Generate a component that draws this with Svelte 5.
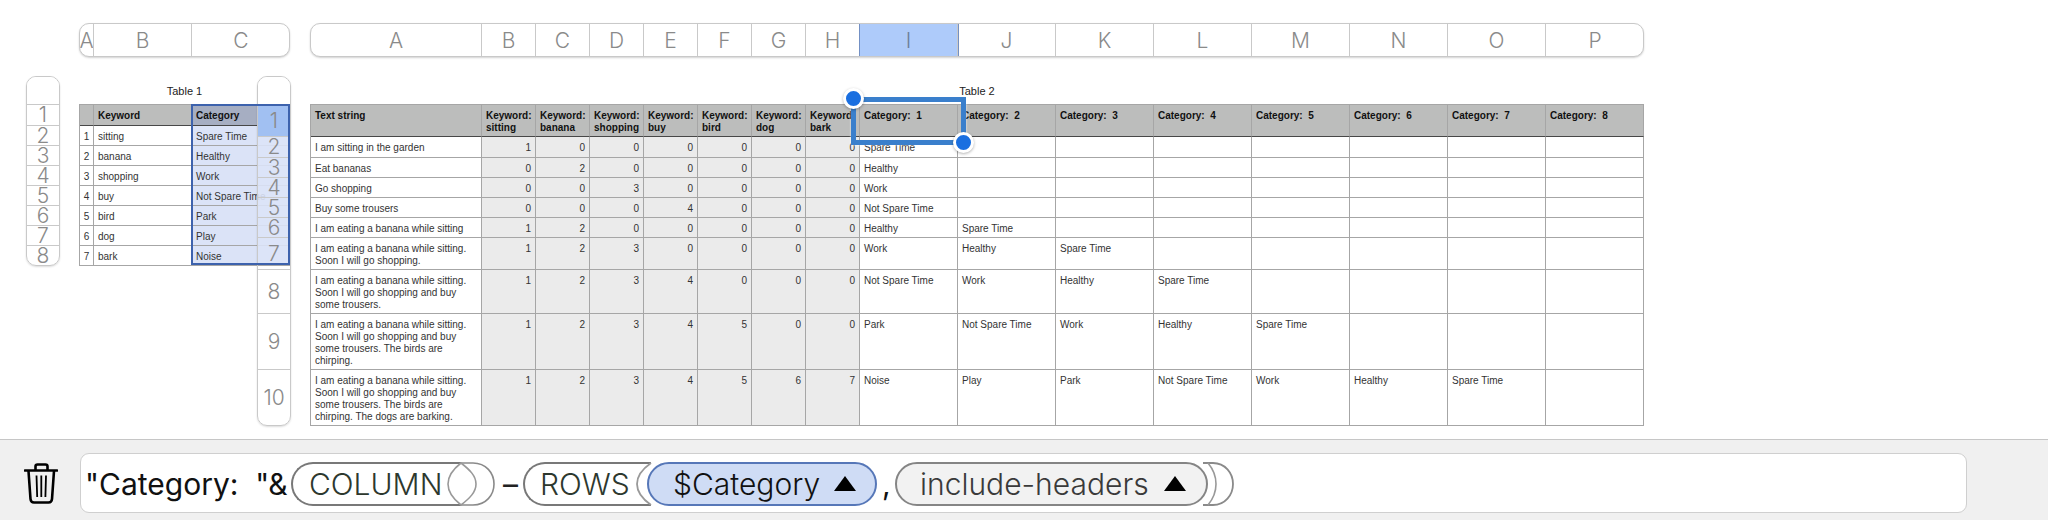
<script>
  const t1Cols = [14, 98, 98];
  const t1Rows = [
    ['sitting', 'Spare Time'],
    ['banana', 'Healthy'],
    ['shopping', 'Work'],
    ['buy', 'Not Spare Time'],
    ['bird', 'Park'],
    ['dog', 'Play'],
    ['bark', 'Noise'],
  ];

  const t2Cols = [171, 54, 54, 54, 54, 54, 54, 54, 98, 98, 98, 98, 98, 98, 98, 98];
  const letters = 'ABCDEFGHIJKLMNOP'.split('');
  const keywords = ['sitting', 'banana', 'shopping', 'buy', 'bird', 'dog', 'bark'];
  const cats = [1, 2, 3, 4, 5, 6, 7, 8];

  const s1 = 'I am eating a banana while sitting.';
  const s2 = s1 + '\nSoon I will go shopping and buy';
  const s3 = s2 + '\nsome trousers. The birds are';
  const t2Rows = [
    ['I am sitting in the garden', [1, 0, 0, 0, 0, 0, 0], ['Spare Time']],
    ['Eat bananas', [0, 2, 0, 0, 0, 0, 0], ['Healthy']],
    ['Go shopping', [0, 0, 3, 0, 0, 0, 0], ['Work']],
    ['Buy some trousers', [0, 0, 0, 4, 0, 0, 0], ['Not Spare Time']],
    ['I am eating a banana while sitting', [1, 2, 0, 0, 0, 0, 0], ['Healthy', 'Spare Time']],
    [s1 + '\nSoon I will go shopping.', [1, 2, 3, 0, 0, 0, 0], ['Work', 'Healthy', 'Spare Time']],
    [s2 + '\nsome trousers.', [1, 2, 3, 4, 0, 0, 0], ['Not Spare Time', 'Work', 'Healthy', 'Spare Time']],
    [s3 + '\nchirping.', [1, 2, 3, 4, 5, 0, 0], ['Park', 'Not Spare Time', 'Work', 'Healthy', 'Spare Time']],
    [s3 + '\nchirping. The dogs are barking.', [1, 2, 3, 4, 5, 6, 7], ['Noise', 'Play', 'Park', 'Not Spare Time', 'Work', 'Healthy', 'Spare Time']],
  ];

  const leftRuler = [21, 20, 20, 20, 20, 20, 20, 20];
  const midRuler = [32, 21, 20, 20, 20, 20, 32, 44, 56, 56];
</script>

<div class="page">
  <div class="sheet">
    <div class="rows left">
      <div class="row-top"></div>
      {#each leftRuler as h, i}
        <div class="row-cell" style="height:{h}px">{i + 1}</div>
      {/each}
    </div>

    <div class="tablewrap t1">
      <div class="cols">
        {#each t1Cols as w, i}
          <div class="col-cell" style="width:{w}px">{letters[i]}</div>
        {/each}
      </div>
      <div class="title">Table 1</div>
      <table>
        <colgroup>
          {#each t1Cols as w}<col style="width:{w}px" />{/each}
        </colgroup>
        <thead>
          <tr>
            <th></th>
            <th>Keyword</th>
            <th class="picked-head">Category</th>
          </tr>
        </thead>
        <tbody>
          {#each t1Rows as r, i}
            <tr>
              <td class="idx">{i + 1}</td>
              <td>{r[0]}</td>
              <td class="picked">{r[1]}</td>
            </tr>
          {/each}
        </tbody>
      </table>
      <div class="veil"></div>
      <div class="col-sel"></div>
    </div>

    <div class="tablewrap t2">
      <div class="cols">
        {#each t2Cols as w, i}
          <div class="col-cell" class:on={i === 8} style="width:{w}px">{letters[i]}</div>
        {/each}
      </div>
      <div class="title">Table 2</div>
      <table>
        <colgroup>
          {#each t2Cols as w}<col style="width:{w}px" />{/each}
        </colgroup>
        <thead>
          <tr>
            <th>Text string</th>
            {#each keywords as k}
              <th>Keyword:<br />{k}</th>
            {/each}
            {#each cats as c}
              <th class="pre">Category:  {c}</th>
            {/each}
          </tr>
        </thead>
        <tbody>
          {#each t2Rows as r}
            <tr>
              <td class="txt">{r[0]}</td>
              {#each r[1] as n}
                <td class="num">{n}</td>
              {/each}
              {#each cats as c, i}
                <td>{r[2][i] ?? ''}</td>
              {/each}
            </tr>
          {/each}
        </tbody>
      </table>

      <div class="rows mid">
        <div class="row-top"></div>
        {#each midRuler as h, i}
          <div class="row-cell" class:on={i === 0} style="height:{h}px">{i + 1}</div>
        {/each}
      </div>

      <div class="cell-sel">
        <span class="handle tl"></span>
        <span class="handle br"></span>
      </div>
    </div>
  </div>

  <div class="bar">
    <svg class="trash" width="34" height="41" viewBox="0 0 34 41" fill="none" stroke="#000" stroke-width="2.6">
      <path d="M1 7.5H33" stroke-linecap="round" />
      <path d="M11.5 7V3.5Q11.5 1.5 13.5 1.5H21.5Q23.5 1.5 23.5 3.5V7" />
      <path d="M4.5 8L6.5 36Q6.8 39.5 10 39.5H24.5Q27.7 39.5 28 36L30 8" />
      <path d="M12.5 12.5L13.2 34M17.3 12.5V34M22 12.5L21.4 34" stroke-width="1.8" />
    </svg>
    <div class="formula">
      <span class="lit">"Category:  "&amp;</span>

      <div class="fn column">
        <span>COLUMN</span>
      </div>
      <svg class="cap-col" width="52" height="44" viewBox="0 0 52 44" fill="none">
        <path d="M16 1H28C41 1 49 11 49 22C49 33 41 43 28 43H16" stroke="#8a8a8a" stroke-width="1.6" />
        <path d="M16 1C7 8 3 14 3 22C3 30 7 36 16 43C25 36 31 30 31 22C31 14 25 8 16 1Z" stroke="#999" stroke-width="1.6" fill="#fff" />
      </svg>

      <span class="minus">–</span>

      <div class="fn rows-fn">
        <span>ROWS</span>
      </div>
      <svg class="open" width="24" height="44" viewBox="0 0 24 44" fill="none">
        <path d="M18 1C8 8 4 14 4 22C4 30 8 36 18 43" stroke="#999" stroke-width="1.8" />
      </svg>

      <div class="arg sel">
        <span>$Category</span>
        <i class="tri"></i>
      </div>
      <span class="comma">,</span>
      <div class="arg">
        <span>include-headers</span>
        <i class="tri"></i>
      </div>

      <svg class="close" width="32" height="44" viewBox="0 0 32 44" fill="none">
        <path d="M0 1H10C22 1 30 11 30 22C30 33 22 43 10 43H0" stroke="#8a8a8a" stroke-width="1.8" />
        <path d="M5 1C10 7 13 14 13 22C13 30 10 37 5 43" stroke="#999" stroke-width="1.6" />
      </svg>
    </div>
  </div>
</div>

<style>
  :global(body) {
    margin: 0;
    background: #fff;
  }

  .page {
    width: 2048px;
    height: 520px;
    overflow: hidden;
    display: flex;
    flex-direction: column;
    font-family: "Liberation Sans", Arial, sans-serif;
  }

  .sheet {
    height: 416px;
    padding: 23px 0 0 26px;
    display: flex;
    align-items: flex-start;
  }

  .rows {
    width: 34px;
    box-sizing: border-box;
    border: 1px solid #c9c9c9;
    border-radius: 10px;
    box-shadow: 0 1px 2px rgba(0, 0, 0, 0.14);
    overflow: hidden;
    font: 300 21px Inter, sans-serif;
    color: #8a8a8a;
  }

  .rows.left {
    height: 190px;
    margin-top: 53px;
  }

  .rows.mid {
    height: 350px;
    position: absolute;
    left: -53px;
    top: 53px;
    z-index: 1;
  }

  .row-top {
    height: 28px;
    box-sizing: border-box;
    background: #fff;
    border-bottom: 1px solid #c9c9c9;
  }

  .row-cell {
    box-sizing: border-box;
    border-bottom: 1px solid #c9c9c9;
    display: flex;
    align-items: center;
    justify-content: center;
    line-height: 18px;
  }

  .row-cell.on {
    background: #a1c0f2;
  }

  .tablewrap {
    position: relative;
    flex: none;
  }

  .t1 {
    width: 211px;
    margin-left: 19px;
  }

  .t2 {
    width: 1334px;
    margin-left: 20px;
  }

  .cols {
    height: 34px;
    box-sizing: border-box;
    display: flex;
    border: 1px solid #c9c9c9;
    border-radius: 10px;
    box-shadow: 0 1px 2px rgba(0, 0, 0, 0.18);
    overflow: hidden;
    background: #fff;
    font: 300 21px Inter, sans-serif;
    color: #8a8a8a;
  }

  .col-cell {
    flex: none;
    box-sizing: border-box;
    border-right: 1px solid #c9c9c9;
    display: flex;
    align-items: center;
    justify-content: center;
    overflow: hidden;
  }

  .col-cell:last-child {
    border-right: none;
  }

  .col-cell.on {
    background: #aecbfa;
    color: #6d7f9c;
    box-shadow: 0 0 0 1px #7390c4;
    position: relative;
  }

  .title {
    height: 47px;
    box-sizing: border-box;
    padding-bottom: 6px;
    display: flex;
    align-items: flex-end;
    justify-content: center;
    font-size: 11px;
    line-height: 14px;
    color: #222;
  }

  table {
    border-collapse: separate;
    border-spacing: 0;
    table-layout: fixed;
    width: 100%;
    border-top: 1px solid #a6a6a6;
    border-left: 1px solid #a6a6a6;
    font-size: 10px;
    line-height: 12px;
    color: #333;
  }

  th,
  td {
    box-sizing: border-box;
    padding: 5px 4px 2px 4px;
    border-right: 1px solid #a6a6a6;
    border-bottom: 1px solid #a6a6a6;
    vertical-align: top;
    text-align: left;
    white-space: nowrap;
    overflow: hidden;
  }

  th {
    background: #bcbdbc;
    color: #111;
    border-bottom-color: #474747;
    height: 21px;
  }

  .t2 th {
    height: 32px;
  }

  td {
    height: 20px;
  }

  .t2 tbody tr:first-child td {
    height: 21px;
  }

  .pre {
    white-space: pre;
  }

  .idx {
    padding: 5px 0 2px 0;
    text-align: center;
  }

  .picked {
    background: #dbe3f7;
  }

  .picked-head {
    background: #a6aec2;
  }

  .txt {
    white-space: pre-line;
  }

  .num {
    background: #ebebeb;
    text-align: right;
  }

  .veil {
    position: absolute;
    left: 178px;
    top: 102px;
    width: 32px;
    height: 140px;
    background: rgba(219, 227, 247, 0.9);
  }

  .col-sel {
    position: absolute;
    left: 112px;
    top: 81px;
    width: 99px;
    height: 161px;
    box-sizing: border-box;
    border: 2px solid #3d62ad;
    z-index: 2;
  }

  .cell-sel {
    position: absolute;
    left: 541px;
    top: 74px;
    width: 115px;
    height: 48px;
    box-sizing: border-box;
    border: 5px solid #3a7fcc;
    box-shadow: 0 0 2px rgba(255, 255, 255, 0.8);
    z-index: 3;
  }

  .handle {
    position: absolute;
    width: 15px;
    height: 15px;
    border: 3px solid #fff;
    border-radius: 50%;
    background: #1a6fe0;
    box-shadow: 0 1px 3px rgba(0, 0, 0, 0.3);
  }

  .handle.tl {
    left: -13px;
    top: -14px;
  }

  .handle.br {
    right: -13px;
    bottom: -13px;
  }

  .bar {
    height: 81px;
    box-sizing: border-box;
    border-top: 1px solid #c6c6c6;
    background: #f0f0f0;
    padding: 13px 0 0 24px;
    display: flex;
    align-items: flex-start;
  }

  .trash {
    flex: none;
    margin: 10px 22px 0 0;
  }

  .formula {
    width: 1887px;
    height: 60px;
    box-sizing: border-box;
    background: #fff;
    border: 1px solid #cfcfcf;
    border-radius: 9px;
    padding: 1px 0 0 4px;
    display: flex;
    align-items: center;
    font: 400 30px Inter, sans-serif;
    color: #111;
    white-space: pre;
  }

  .lit {
    width: 206px;
    flex: none;
  }

  .fn {
    height: 44px;
    box-sizing: border-box;
    border: 2px solid #787878;
    border-right: none;
    border-radius: 22px 0 0 22px;
    display: flex;
    align-items: center;
    color: #2d382e;
    font-weight: 300;
    flex: none;
  }

  .column {
    width: 170px;
    padding-left: 16px;
  }

  .cap-col {
    flex: none;
    margin-left: -16px;
    margin-right: 6px;
  }

  .minus {
    width: 20px;
    flex: none;
    color: #222;
  }

  .rows-fn {
    width: 128px;
    padding-left: 15px;
  }

  .open {
    flex: none;
    margin: 0 -10px 0 -18px;
    position: relative;
  }

  .arg {
    height: 44px;
    box-sizing: border-box;
    border: 2px solid #858585;
    border-radius: 22px;
    background: #f2f2f2;
    color: #3a3a3a;
    font-weight: 300;
    padding: 0 20px 0 23px;
    display: flex;
    align-items: center;
    gap: 15px;
    flex: none;
    position: relative;
  }

  .arg.sel {
    width: 230px;
    padding-left: 24px;
    gap: 14px;
    background: #cfdcf5;
    border-color: #5677b8;
    color: #111;
    box-shadow: 0 0 0 3px #fff;
  }

  .tri {
    flex: none;
    width: 0;
    height: 0;
    border-left: 11px solid transparent;
    border-right: 11px solid transparent;
    border-bottom: 15px solid #000;
  }

  .comma {
    width: 18px;
    flex: none;
    padding-left: 5px;
    box-sizing: border-box;
  }

  .close {
    flex: none;
    margin-left: -5px;
  }
</style>
